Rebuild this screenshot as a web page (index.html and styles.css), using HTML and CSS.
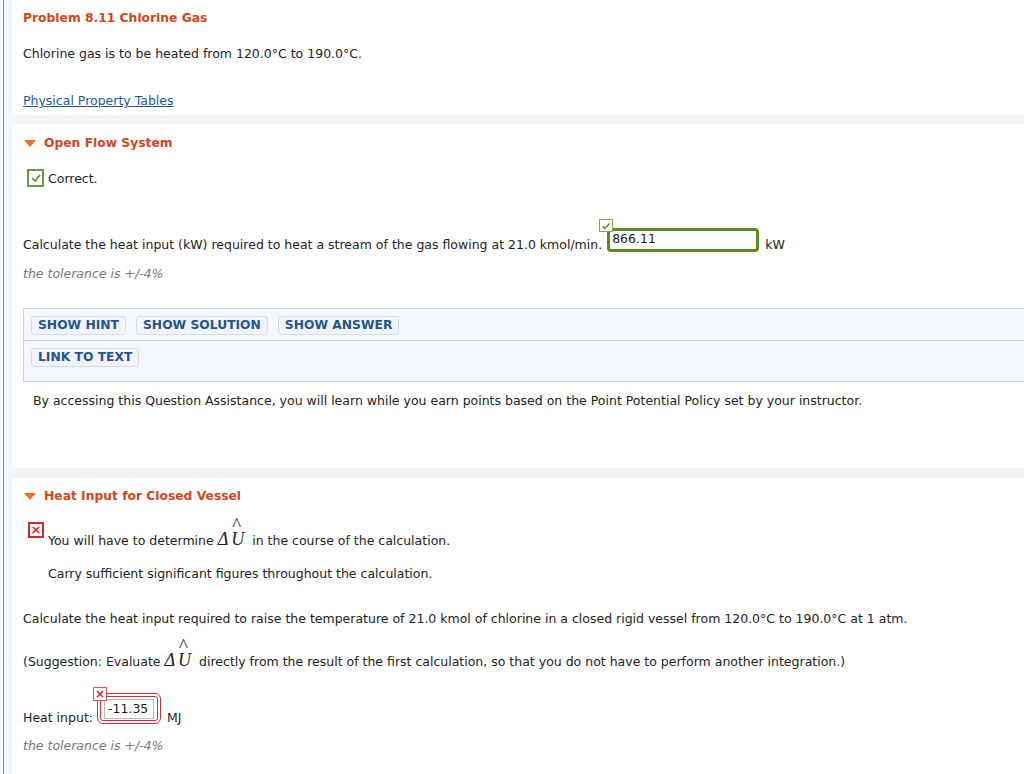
FILE: index.html
```html
<!DOCTYPE html>
<html>
<head>
<meta charset="utf-8">
<link rel="stylesheet" href="styles.css">
</head>
<body>
<div class="frame">
  <div class="panel p1">
    <div class="title">Problem 8.11 Chlorine Gas</div>
    <p class="intro">Chlorine gas is to be heated from 120.0°C to 190.0°C.</p>
    <a class="link" href="#">Physical Property Tables</a>
  </div>

  <div class="panel p2">
    <div class="heading"><span class="tri"></span>Open Flow System</div>
    <div class="status"><span class="chk ok"><svg width="12" height="10" viewBox="0 0 12 10"><path d="M2 5 L5 8 L10 2" fill="none" stroke="#5a8f2a" stroke-width="1.6"/></svg></span>Correct.</div>
    <div class="qrow">
      <span class="qtext">Calculate the heat input (kW) required to heat a stream of the gas flowing at 21.0 kmol/min.</span>
      <span class="field good">
        <span class="badge good"><svg width="10" height="8" viewBox="0 0 10 8"><path d="M1.5 4 L4 6.5 L8.5 1.5" fill="none" stroke="#5a8f2a" stroke-width="1.4"/></svg></span>
        <span class="val">866.11</span>
      </span>
      <span class="unit">kW</span>
    </div>
    <div class="tol">the tolerance is +/-4%</div>
    <div class="assist">
      <div class="arow top">
        <span class="btn">SHOW HINT</span>
        <span class="btn">SHOW SOLUTION</span>
        <span class="btn">SHOW ANSWER</span>
      </div>
      <div class="arow bottom">
        <span class="btn">LINK TO TEXT</span>
      </div>
    </div>
    <p class="policy">By accessing this Question Assistance, you will learn while you earn points based on the Point Potential Policy set by your instructor.</p>
  </div>

  <div class="panel p3">
    <div class="heading"><span class="tri"></span>Heat Input for Closed Vessel</div>
    <div class="xrow">
      <span class="chk bad">×</span>
      <div class="xtext">
        <p class="l1">You will have to determine <span class="math"><span class="d">Δ</span><span class="u">U<span class="hat">^</span></span></span>&nbsp; in the course of the calculation.</p>
        <p class="l2">Carry sufficient significant figures throughout the calculation.</p>
      </div>
    </div>
    <p class="q2">Calculate the heat input required to raise the temperature of 21.0 kmol of chlorine in a closed rigid vessel from 120.0°C to 190.0°C at 1 atm.</p>
    <p class="q3">(Suggestion: Evaluate <span class="math"><span class="d">Δ</span><span class="u">U<span class="hat">^</span></span></span>&nbsp; directly from the result of the first calculation, so that you do not have to perform another integration.)</p>
    <div class="hrow">
      <span class="hlabel">Heat input:</span>
      <span class="field bad">
        <span class="badge bad">×</span>
        <span class="inner">-11.35</span>
      </span>
      <span class="unit">MJ</span>
    </div>
    <div class="tol t2">the tolerance is +/-4%</div>
  </div>
</div>
</body>
</html>
```

FILE: styles.css
```css
html, body {
  margin: 0;
  padding: 0;
  background: #f3f6f9;
}
body {
  font-family: "DejaVu Sans", Verdana, sans-serif;
  font-size: 12.5px;
  line-height: 15px;
  color: #222;
  overflow: hidden;
}
.frame {
  margin-left: 3px;
  border-left: 1px solid #8a8a8a;
  padding-left: 8px;
  min-height: 774px;
  background: #f3f6f9;
}
.panel {
  background: #fff;
  padding: 0 0 0 11px;
  overflow: hidden;
}
p { margin: 0; }
.p1 { padding-top: 11px; padding-bottom: 7px; }
.title {
  font-weight: bold;
  color: #d2461b;
  font-size: 12.3px;
}
.intro { margin-top: 20px; }
.link {
  display: block;
  margin-top: 32px;
  color: #1c5c99;
  text-decoration: underline;
}
.p2 { margin-top: 9px; padding-top: 12px; padding-bottom: 60px; }
.heading {
  font-weight: bold;
  color: #d2461b;
  font-size: 12.3px;
  display: flex;
  align-items: center;
}
.tri {
  width: 0;
  height: 0;
  border-left: 6.5px solid transparent;
  border-right: 6.5px solid transparent;
  border-top: 7px solid #f26b22;
  margin-left: 1px;
  margin-right: 8px;
}
.status {
  margin-top: 18px;
  display: flex;
  align-items: center;
  margin-left: 4px;
}
.chk {
  display: inline-flex;
  align-items: center;
  justify-content: center;
  box-sizing: border-box;
  flex: none;
}
.chk.ok {
  width: 17px;
  height: 18px;
  border: 2px solid #6a9a3a;
  margin-right: 4px;
}
.qrow {
  margin-top: 41px;
  display: flex;
  align-items: flex-end;
}
.field {
  position: relative;
  box-sizing: border-box;
  flex: none;
}
.field.good {
  margin-left: 5px;
  width: 152px;
  height: 24px;
  border: 3px solid #5b8c1e;
  border-radius: 4px;
  padding: 1px 2px;
  line-height: 14px;
}
.badge {
  position: absolute;
  box-sizing: border-box;
  background: #fff;
  display: flex;
  align-items: center;
  justify-content: center;
}
.badge.good {
  left: -11px;
  top: -12px;
  width: 14px;
  height: 13px;
  border: 1px solid #7aa84a;
}
.unit { margin-left: 6px; }
.tol {
  margin-top: 14px;
  font-style: italic;
  color: #777;
}
.assist {
  margin-top: 27px;
  margin-right: -40px;
  border: 1px solid #c9d4df;
  background: #f4f7fb;
}
.arow {
  display: flex;
  gap: 10px;
  padding-left: 7px;
}
.arow.top {
  padding-top: 7px;
  padding-bottom: 5px;
  border-bottom: 1px solid #c9d4df;
}
.arow.bottom {
  padding-top: 7px;
  padding-bottom: 14px;
}
.btn {
  box-sizing: border-box;
  height: 19px;
  line-height: 17px;
  padding: 0 6px;
  border: 1px solid #d6dde6;
  border-radius: 3px;
  background: #f0f3f7;
  color: #24558f;
  font-weight: bold;
  font-size: 12.3px;
}
.policy { margin-top: 11px; margin-left: 10px; }
.p3 { margin-top: 10px; padding-top: 11px; padding-bottom: 40px; }
.xrow {
  margin-top: 18px;
  display: flex;
  align-items: flex-start;
  margin-left: 5px;
}
.chk.bad {
  width: 16px;
  height: 16px;
  border: 2px solid #d9232d;
  color: #d9232d;
  font-weight: bold;
  font-size: 13px;
  line-height: 12px;
  margin-right: 4px;
}
.xtext { padding-top: 11px; }
.math {
  font-family: "Liberation Serif", "Times New Roman", serif;
  font-style: italic;
  font-size: 18px;
  line-height: 10px;
}
.math .d { margin-right: 3px; }
.math .u { position: relative; }
.hat {
  position: absolute;
  left: 1px;
  top: -8px;
  font-style: normal;
  font-family: "Liberation Serif", serif;
  font-size: 19px;
  line-height: 8px;
}
.l2 { margin-top: 18px; }
.q2 { margin-top: 30px; }
.q3 { margin-top: 28px; }
.hrow {
  margin-top: 24px;
  display: flex;
  align-items: flex-end;
}
.field.bad {
  margin-left: 4px;
  margin-bottom: 1px;
  width: 64px;
  height: 31px;
  border: 4px double #dd2a33;
  border-radius: 6px;
  padding: 2px 3px;
}
.inner {
  display: block;
  box-sizing: border-box;
  height: 20px;
  border: 1px solid #bbb;
  background: #fff;
  padding: 1px 3px;
  font-size: 12.5px;
  line-height: 16px;
}
.badge.bad {
  left: -8px;
  top: -10px;
  width: 14px;
  height: 14px;
  border: 1px solid #e05058;
  color: #d9232d;
  font-weight: bold;
  font-size: 12px;
  line-height: 12px;
}
.t2 { margin-top: 13px; }
```
